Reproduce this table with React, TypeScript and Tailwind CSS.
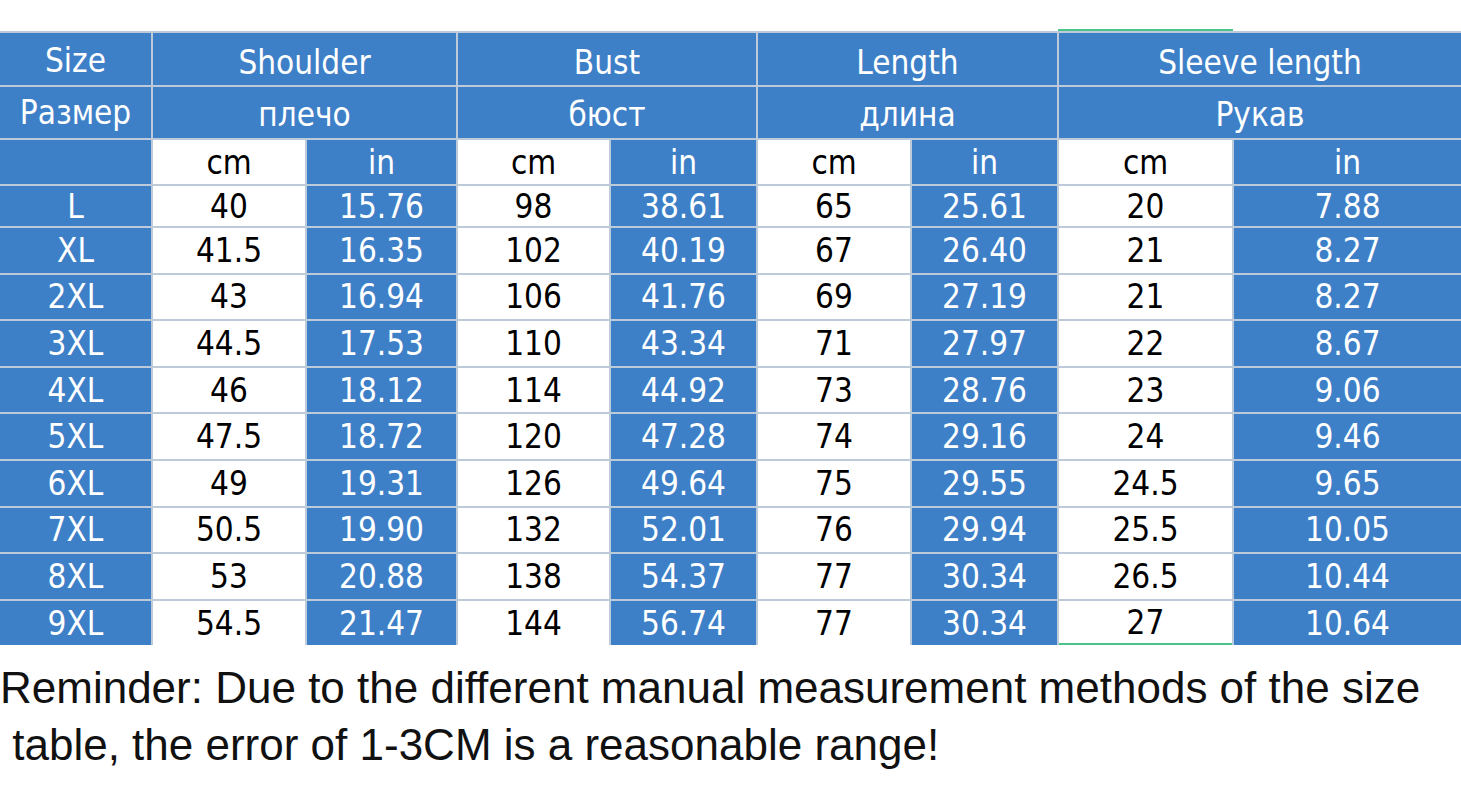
import React from "react";

const rows: string[][] = [
  ["L", "40", "15.76", "98", "38.61", "65", "25.61", "20", "7.88"],
  ["XL", "41.5", "16.35", "102", "40.19", "67", "26.40", "21", "8.27"],
  ["2XL", "43", "16.94", "106", "41.76", "69", "27.19", "21", "8.27"],
  ["3XL", "44.5", "17.53", "110", "43.34", "71", "27.97", "22", "8.67"],
  ["4XL", "46", "18.12", "114", "44.92", "73", "28.76", "23", "9.06"],
  ["5XL", "47.5", "18.72", "120", "47.28", "74", "29.16", "24", "9.46"],
  ["6XL", "49", "19.31", "126", "49.64", "75", "29.55", "24.5", "9.65"],
  ["7XL", "50.5", "19.90", "132", "52.01", "76", "29.94", "25.5", "10.05"],
  ["8XL", "53", "20.88", "138", "54.37", "77", "30.34", "26.5", "10.44"],
  ["9XL", "54.5", "21.47", "144", "56.74", "77", "30.34", "27", "10.64"],
];

const blue = "bg-[#3d80c8] text-white";
const white = "bg-white text-black";

function Cell({
  children,
  className = "",
}: {
  children?: React.ReactNode;
  className?: string;
}) {
  return (
    <div className={`flex items-center justify-center leading-none ${className}`}>
      {children}
    </div>
  );
}

export default function App() {
  const heads1 = ["Shoulder", "Bust", "Length", "Sleeve length"];
  const heads2 = ["плечо", "бюст", "длина", "Рукав"];
  return (
    <div className="w-[1461px] h-[800px] bg-white overflow-hidden">
      <div className="h-[31px]" />
      <div
        className="grid gap-[2px] pt-[2px] bg-[#bccada] grid-cols-[151px_152px_149px_151px_145px_152px_145px_173px_227px] grid-rows-[52px_51px_44px_40px_repeat(9,44.6px)] text-[33px]"
        style={{ fontFamily: '"DejaVu Sans Condensed", "DejaVu Sans", Verdana, sans-serif' }}
      >
        <Cell className={blue}>
          <span className="pt-[2px]">Size</span>
        </Cell>
        {heads1.map((h) => (
          <Cell key={h} className={`${blue} col-span-2`}>
            <span className="pt-[6px]">{h}</span>
          </Cell>
        ))}
        <Cell className={blue}>Размер</Cell>
        {heads2.map((h) => (
          <Cell key={h} className={`${blue} col-span-2`}>
            <span className="pt-[4px]">{h}</span>
          </Cell>
        ))}
        <Cell className={blue} />
        {[0, 1, 2, 3].map((i) => (
          <React.Fragment key={i}>
            <Cell className={white}>cm</Cell>
            <Cell className={blue}>in</Cell>
          </React.Fragment>
        ))}
        {rows.map((r, ri) =>
          r.map((v, ci) => (
            <Cell
              key={`${ri}-${ci}`}
              className={`${ci === 0 || ci % 2 === 0 ? blue : white} ${
                ri === rows.length - 1 && ci === 7
                  ? "border-b-2 border-[#4cc489]"
                  : ""
              }`}
            >
              {v}
            </Cell>
          ))
        )}
      </div>
      <div className="relative">
        <div className="absolute left-[1058px] top-[-616px] w-[175px] h-[2px] bg-[#4cc489]" />
      </div>
      <div
        className="mt-[14px] text-[44px] leading-[57px] text-[#111] whitespace-pre"
        style={{ fontFamily: '"Liberation Sans", Arial, sans-serif' }}
      >
        <div>Reminder: Due to the different manual measurement methods of the size</div>
        <div>{" table, the error of 1-3CM is a reasonable range!"}</div>
      </div>
    </div>
  );
}
